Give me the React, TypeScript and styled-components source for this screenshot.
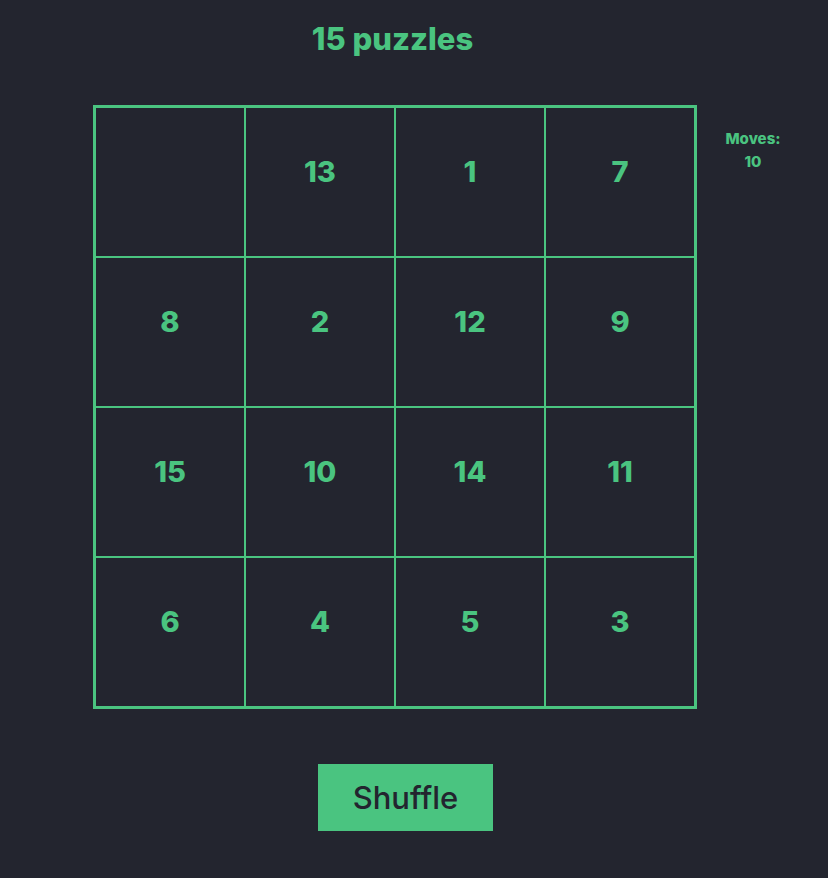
import React, { useState } from "react";
import styled, { createGlobalStyle } from "styled-components";

const GREEN = "#4ac480";
const BG = "#23252f";

const Global = createGlobalStyle`
  html, body {
    margin: 0;
    padding: 0;
    background: ${BG};
    height: 100%;
  }
  body {
    font-family: Inter, "Noto Sans", sans-serif;
  }
`;

const Page = styled.main`
  display: flex;
  flex-direction: column;
  align-items: flex-start;
  padding: 20px 0 0 93px;
  min-height: 878px;
  box-sizing: border-box;
`;

const Title = styled.h1`
  margin: 0;
  width: 604px;
  padding-right: 5px;
  box-sizing: border-box;
  text-align: center;
  font-size: 31px;
  font-weight: 800;
  color: ${GREEN};
  line-height: 38px;
`;

const BoardRow = styled.div`
  display: flex;
  align-items: flex-start;
  margin-top: 47px;
`;

const Board = styled.div`
  display: grid;
  grid-template-columns: repeat(4, 150px);
  grid-template-rows: repeat(4, 150px);
  border: 2px solid ${GREEN};
`;

const Cell = styled.div<{ $empty?: boolean }>`
  box-sizing: border-box;
  border: 1px solid ${GREEN};
  display: flex;
  align-items: center;
  justify-content: center;
  padding-bottom: 22px;
  font-size: 29px;
  font-weight: 800;
  color: ${GREEN};
  cursor: ${(p) => (p.$empty ? "default" : "pointer")};
`;

const MovesPanel = styled.div`
  width: 60px;
  margin-left: 26px;
  margin-top: 22px;
  text-align: center;
  font-size: 15px;
  font-weight: 800;
  line-height: 23px;
  color: ${GREEN};
`;

const ShuffleButton = styled.button`
  margin-top: 55px;
  margin-left: 225px;
  width: 175px;
  height: 67px;
  padding: 0;
  border: none;
  background: ${GREEN};
  color: ${BG};
  font-family: Inter, "Noto Sans", sans-serif;
  font-size: 31px;
  font-weight: 550;
  cursor: pointer;
`;

const initial = [0, 13, 1, 7, 8, 2, 12, 9, 15, 10, 14, 11, 6, 4, 5, 3];

export default function App() {
  const [tiles] = useState<number[]>(initial);
  const [moves] = useState(10);
  return (
    <>
      <Global />
      <Page>
        <Title>15 puzzles</Title>
        <BoardRow>
          <Board>
            {tiles.map((t, i) => (
              <Cell key={i} $empty={t === 0}>
                {t === 0 ? "" : t}
              </Cell>
            ))}
          </Board>
          <MovesPanel>
            <div>Moves:</div>
            <div>{moves}</div>
          </MovesPanel>
        </BoardRow>
        <ShuffleButton>Shuffle</ShuffleButton>
      </Page>
    </>
  );
}
